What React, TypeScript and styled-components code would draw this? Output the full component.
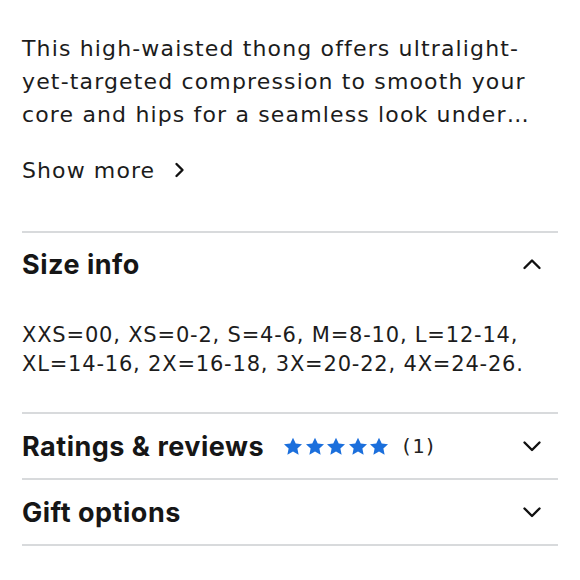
import React from "react";
import styled, { createGlobalStyle } from "styled-components";

const Global = createGlobalStyle`
  html, body { margin: 0; padding: 0; background: #fff; }
  body { font-family: "DejaVu Sans", "Liberation Sans", sans-serif; color: #1c1c1c; }
`;

const Page = styled.div`
  width: 580px;
  height: 580px;
  box-sizing: border-box;
  padding: 32px 22px 0 22px;
  display: flex;
  flex-direction: column;
`;

const Body = styled.p<{ $lh: number; $ls: number; $fs: number }>`
  margin: 0;
  font-family: "DejaVu Sans", sans-serif;
  font-size: ${(p) => p.$fs}px;
  line-height: ${(p) => p.$lh}px;
  letter-spacing: ${(p) => p.$ls}px;
  color: #1c1c1c;
`;

const ShowMore = styled.button`
  margin-top: 24px;
  padding: 0;
  border: none;
  background: none;
  display: flex;
  align-items: center;
  gap: 19px;
  font-family: "DejaVu Sans", sans-serif;
  font-size: 22px;
  letter-spacing: 1.1px;
  color: #1c1c1c;
  height: 30px;
  align-self: flex-start;
`;

const Section = styled.section<{ $gap?: number }>`
  border-top: 2px solid #d8dadc;
  margin-top: ${(p) => p.$gap ?? 0}px;
`;

const Header = styled.div<{ $h: number }>`
  height: ${(p) => p.$h}px;
  display: flex;
  align-items: center;
  padding-right: 16px;
`;

const Title = styled.h2`
  margin: 0;
  font-family: Inter, sans-serif;
  font-weight: 700;
  font-size: 27px;
  letter-spacing: 0.5px;
  color: #161616;
`;

const Stars = styled.div`
  display: flex;
  gap: 1.5px;
  margin-left: 19px;
`;

const Count = styled.span`
  margin-left: 11px;
  font-family: "DejaVu Sans Mono", monospace;
  font-size: 20px;
  color: #222;
`;

const Chevron = styled.svg`
  margin-left: auto;
  width: 20px;
  height: 20px;
`;

const SizeText = styled(Body)`
  padding: 26px 0 34px 0;
`;

const Star = () => (
  <svg width="20" height="19" viewBox="0 0 24 23">
    <path
      d="M12 0.8l3.3 7 7.6 0.9-5.6 5.2 1.5 7.6L12 17.7l-6.8 3.8 1.5-7.6L1.1 8.7l7.6-0.9z"
      fill="#1b6fdc"
    />
  </svg>
);

const Down = () => (
  <Chevron viewBox="0 0 20 20">
    <path d="M2.5 6.5l7.5 7.5 7.5-7.5" fill="none" stroke="#111" strokeWidth="2.4" strokeLinecap="round" strokeLinejoin="round" />
  </Chevron>
);

const Up = () => (
  <Chevron viewBox="0 0 20 20">
    <path d="M2.5 14l7.5-7.5 7.5 7.5" fill="none" stroke="#111" strokeWidth="2.4" strokeLinecap="round" strokeLinejoin="round" />
  </Chevron>
);

export default function App() {
  return (
    <>
      <Global />
      <Page>
        <Body $fs={22} $lh={33} $ls={1.15}>
          This high-waisted thong offers ultralight-yet-targeted compression to smooth your core and hips for a seamless look under…
        </Body>
        <ShowMore>
          Show more
          <svg width="11" height="16" viewBox="0 0 11 16">
            <path d="M2.5 2l6 6-6 6" fill="none" stroke="#111" strokeWidth="2.4" strokeLinecap="round" strokeLinejoin="round" />
          </svg>
        </ShowMore>
        <Section $gap={46}>
          <Header $h={62}>
            <Title>Size info</Title>
            <Up />
          </Header>
          <SizeText $fs={21} $lh={28.5} $ls={0.8}>
            XXS=00, XS=0-2, S=4-6, M=8-10, L=12-14, XL=14-16, 2X=16-18, 3X=20-22, 4X=24-26.
          </SizeText>
        </Section>
        <Section>
          <Header $h={64}>
            <Title>Ratings &amp; reviews</Title>
            <Stars>
              <Star /><Star /><Star /><Star /><Star />
            </Stars>
            <Count>(1)</Count>
            <Down />
          </Header>
        </Section>
        <Section>
          <Header $h={64}>
            <Title>Gift options</Title>
            <Down />
          </Header>
        </Section>
        <Section />
      </Page>
    </>
  );
}
